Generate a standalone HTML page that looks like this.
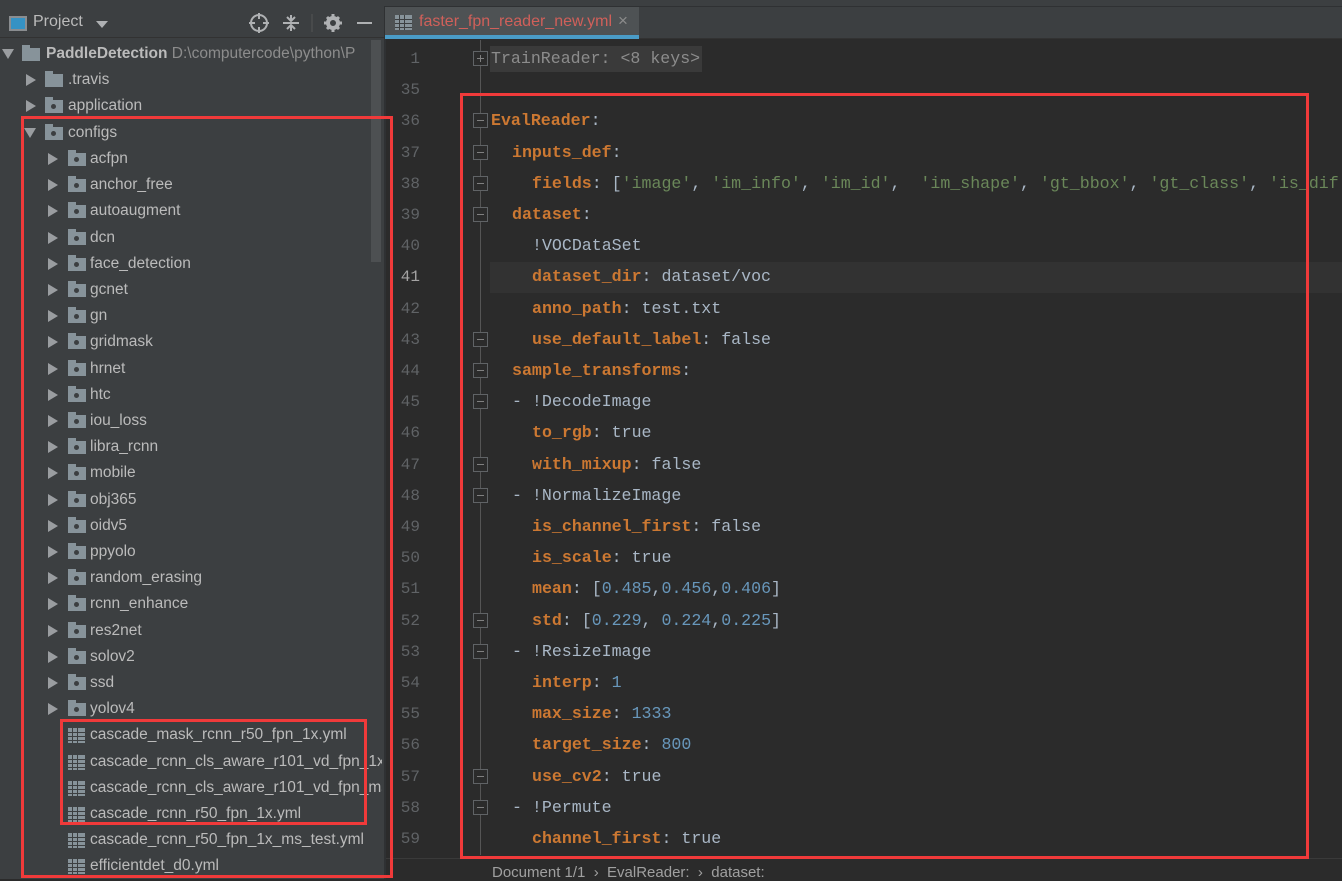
<!DOCTYPE html>
<html><head><meta charset="utf-8"><style>
*{margin:0;padding:0;box-sizing:border-box}
body{width:1342px;height:879px;overflow:hidden;background:#2b2b2b;position:relative;font-family:"Liberation Sans",sans-serif}
.a{position:absolute}
#left{left:0;top:0;width:384px;height:879px;background:#3c3f41}
.row{position:absolute;height:26px;line-height:26px;font-size:15.5px;color:#bbbbbb;white-space:nowrap}
.tri{position:absolute;width:0;height:0;border-top:6px solid transparent;border-bottom:6px solid transparent;border-left:10px solid #9a9da0}
.trid{position:absolute;width:0;height:0;border-left:6px solid transparent;border-right:6px solid transparent;border-top:10px solid #9a9da0}
.fold{position:absolute;width:18px;height:13px;background:#87939a}
.fold:before{content:"";position:absolute;left:0;top:-3px;width:8px;height:3px;background:#87939a}
.fold i{position:absolute;left:6px;top:4px;width:5px;height:5px;border-radius:50%;background:#3c3f41}
.yml{position:absolute;width:17px;height:15px;background:#87939a;
background-image:linear-gradient(90deg,transparent 4px,#3c3f41 4px,#3c3f41 5px,transparent 5px,transparent 9px,#3c3f41 9px,#3c3f41 10px,transparent 10px),linear-gradient(transparent 4px,#3c3f41 4px,#3c3f41 5px,transparent 5px,transparent 8px,#3c3f41 8px,#3c3f41 9px,transparent 9px,transparent 12px,#3c3f41 12px,#3c3f41 13px,transparent 13px)}
.code{position:absolute;font-family:"Liberation Mono",monospace;font-size:16.6px;color:#a9b7c6;white-space:pre;line-height:24px}
.k{color:#cc7832;font-weight:bold}
.s{color:#6a8759}
.n{color:#6897bb}
.ln{position:absolute;left:390px;width:30px;text-align:right;font-family:"Liberation Mono",monospace;font-size:16px;color:#606366;line-height:24px}
.fm{position:absolute;left:473px;width:15px;height:15px;border:1px solid #606366;background:#2b2b2b}
.fm:after{content:"";position:absolute;left:3px;top:6px;width:7px;height:1px;background:#808080}
.fm.p:before{content:"";position:absolute;left:6px;top:3px;width:1px;height:7px;background:#808080}
.red{position:absolute;border:3px solid #f03a3a}
#tw{position:absolute;left:0;top:2px;width:384px;height:877px}
</style></head><body>
<div class="a" style="left:0;top:0;width:1342px;height:7px;background:#3c3f41;border-bottom:1px solid #2f3133"></div>
<div class="a" id="left"></div>
<div class="a" style="left:0;top:7px;width:384px;height:31px;background:#3c3f41;border-bottom:1px solid #323232"></div>
<div class="a" style="left:9px;top:16px;width:18px;height:15px;border:2px solid #8a8d90;background:#3592c4"></div>
<div class="a" style="left:33px;top:13px;font-size:16px;color:#bbbbbb">Project</div>
<div class="a" style="left:96px;top:21px;border-left:6px solid transparent;border-right:6px solid transparent;border-top:7px solid #afb1b3"></div>
<svg class="a" style="left:248px;top:12px" width="130" height="22">
<circle cx="11" cy="11" r="8" fill="none" stroke="#afb1b3" stroke-width="2"/><path d="M11 1v6M11 15v6M1 11h6M15 11h6" stroke="#afb1b3" stroke-width="2"/>
<path d="M35 11h16M43 3v5M39 5l4 4 4-4M43 19v-5M39 17l4-4 4 4" stroke="#afb1b3" stroke-width="2" fill="none"/>
<line x1="64" y1="2" x2="64" y2="20" stroke="#555" stroke-width="1"/>
<circle cx="85" cy="11" r="5" fill="none" stroke="#afb1b3" stroke-width="4"/><path d="M85 2v4M85 16v4M76 11h4M90 11h4M79 5l2 2M89 15l2 2M91 5l-2 2M79 17l2-2" stroke="#afb1b3" stroke-width="3"/>
<path d="M109 11h15" stroke="#afb1b3" stroke-width="2"/>
</svg>
<div class="a" style="left:371px;top:40px;width:10px;height:222px;background:#4d5052"></div>
<div class="a" style="left:384px;top:7px;width:2px;height:872px;background:#2f3133"></div>

<div id="tw">
<div class="trid" style="left:2px;top:47px"></div>
<div class="fold" style="left:22px;top:46px;width:18px"></div>
<div class="row" style="left:46px;top:39px"><b style="color:#bbbbbb">PaddleDetection</b> <span style="color:#8c8c8c">D:\computercode\python\P</span></div>
<div class="tri" style="left:26px;top:72px"></div><div class="fold" style="left:45px;top:72px"></div><div class="row" style="left:68px;top:65px">.travis</div>
<div class="tri" style="left:26px;top:98px"></div><div class="fold" style="left:45px;top:98px"><i></i></div><div class="row" style="left:68px;top:91px">application</div>
<div class="trid" style="left:24px;top:126px"></div><div class="fold" style="left:45px;top:125px"><i></i></div><div class="row" style="left:68px;top:118px">configs</div>
<div id="tree2"></div>
</div>
<script>
var names=["acfpn","anchor_free","autoaugment","dcn","face_detection","gcnet","gn","gridmask","hrnet","htc","iou_loss","libra_rcnn","mobile","obj365","oidv5","ppyolo","random_erasing","rcnn_enhance","res2net","solov2","ssd","yolov4"];
var files=["cascade_mask_rcnn_r50_fpn_1x.yml","cascade_rcnn_cls_aware_r101_vd_fpn_1x","cascade_rcnn_cls_aware_r101_vd_fpn_ms","cascade_rcnn_r50_fpn_1x.yml","cascade_rcnn_r50_fpn_1x_ms_test.yml","efficientdet_d0.yml"];
var h="";
for(var i=0;i<names.length;i++){var c=157+26.2*i;
h+='<div class="tri" style="left:48px;top:'+(c-6)+'px"></div><div class="fold" style="left:68px;top:'+(c-6)+'px"><i></i></div><div class="row" style="left:90px;top:'+(c-13)+'px">'+names[i]+'</div>';}
for(var j=0;j<files.length;j++){var c=157+26.2*(names.length+j);
h+='<div class="yml" style="left:68px;top:'+(c-7)+'px"></div><div class="row" style="left:90px;top:'+(c-13)+'px;width:292px;overflow:hidden">'+files[j]+'</div>';}
document.getElementById("tree2").innerHTML=h;
</script>

<div class="a" style="left:386px;top:7px;width:956px;height:32px;background:#3c3f41;border-bottom:1px solid #323232"></div>
<div class="a" style="left:385px;top:7px;width:254px;height:32px;background:#4e5254"></div>
<div class="a" style="left:385px;top:35px;width:254px;height:4px;background:#4a9cc7"></div>
<div class="yml" style="left:395px;top:15px;background-color:#87939a"></div>
<div class="a" style="left:419px;top:13px;font-size:16px;color:#d0605a">faster_fpn_reader_new.yml</div>
<div class="a" style="left:618px;top:11px;font-size:17px;color:#8c8c8c">×</div>

<div class="a" style="left:490px;top:262px;width:852px;height:31px;background:#323232"></div>
<div class="a" style="left:480px;top:40px;width:1px;height:815px;background:#555"></div>
<div class="a" style="left:490px;top:46px;width:212px;height:26px;background:#3a3a3a"></div>
<div id="ed"></div>
<script>
var L=[
["1",491,'<span style="color:#8c8c8c">TrainReader: &lt;8 keys&gt;</span>'],
["35",0,''],
["36",491,'<span class="k">EvalReader</span>:'],
["37",512,'<span class="k">inputs_def</span>:'],
["38",532,'<span class="k">fields</span>: [<span class="s">\'image\'</span>, <span class="s">\'im_info\'</span>, <span class="s">\'im_id\'</span>,  <span class="s">\'im_shape\'</span>, <span class="s">\'gt_bbox\'</span>, <span class="s">\'gt_class\'</span>, <span class="s">\'is_dif</span>'],
["39",512,'<span class="k">dataset</span>:'],
["40",532,'!VOCDataSet'],
["41",532,'<span class="k">dataset_dir</span>: dataset/voc'],
["42",532,'<span class="k">anno_path</span>: test.txt'],
["43",532,'<span class="k">use_default_label</span>: false'],
["44",512,'<span class="k">sample_transforms</span>:'],
["45",512,'- !DecodeImage'],
["46",532,'<span class="k">to_rgb</span>: true'],
["47",532,'<span class="k">with_mixup</span>: false'],
["48",512,'- !NormalizeImage'],
["49",532,'<span class="k">is_channel_first</span>: false'],
["50",532,'<span class="k">is_scale</span>: true'],
["51",532,'<span class="k">mean</span>: [<span class="n">0.485</span>,<span class="n">0.456</span>,<span class="n">0.406</span>]'],
["52",532,'<span class="k">std</span>: [<span class="n">0.229</span>, <span class="n">0.224</span>,<span class="n">0.225</span>]'],
["53",512,'- !ResizeImage'],
["54",532,'<span class="k">interp</span>: <span class="n">1</span>'],
["55",532,'<span class="k">max_size</span>: <span class="n">1333</span>'],
["56",532,'<span class="k">target_size</span>: <span class="n">800</span>'],
["57",532,'<span class="k">use_cv2</span>: true'],
["58",512,'- !Permute'],
["59",532,'<span class="k">channel_first</span>: true']];
var folds={"1":1,"36":1,"37":1,"38":1,"39":1,"43":1,"44":1,"45":1,"47":1,"48":1,"52":1,"53":1,"57":1,"58":1};
var e="";
for(var i=0;i<L.length;i++){var c=59+31.2*i;
e+='<div class="ln" style="top:'+(c-12)+'px;'+(L[i][0]=="41"?"color:#a4a3a3":"")+'">'+L[i][0]+'</div>';
if(folds[L[i][0]])e+='<div class="fm'+(L[i][0]=="1"?" p":"")+'" style="top:'+(c-8)+'px"></div>';
if(L[i][1])e+='<div class="code" style="left:'+L[i][1]+'px;top:'+(c-12)+'px">'+L[i][2]+'</div>';}
document.getElementById("ed").innerHTML=e;
</script>
<div class="a" style="left:386px;top:858px;width:956px;height:21px;background:#2b2b2b;border-top:1px solid #3a3a3a"></div>
<div class="a" style="left:492px;top:864px;font-size:15px;color:#a0a0a0;white-space:nowrap">Document 1/1 &nbsp;›&nbsp; EvalReader: &nbsp;›&nbsp; dataset:</div>

<div class="red" style="left:21px;top:116px;width:372px;height:762px"></div>
<div class="red" style="left:60px;top:719px;width:307px;height:106px"></div>
<div class="red" style="left:460px;top:93px;width:849px;height:766px"></div>
</body></html>
